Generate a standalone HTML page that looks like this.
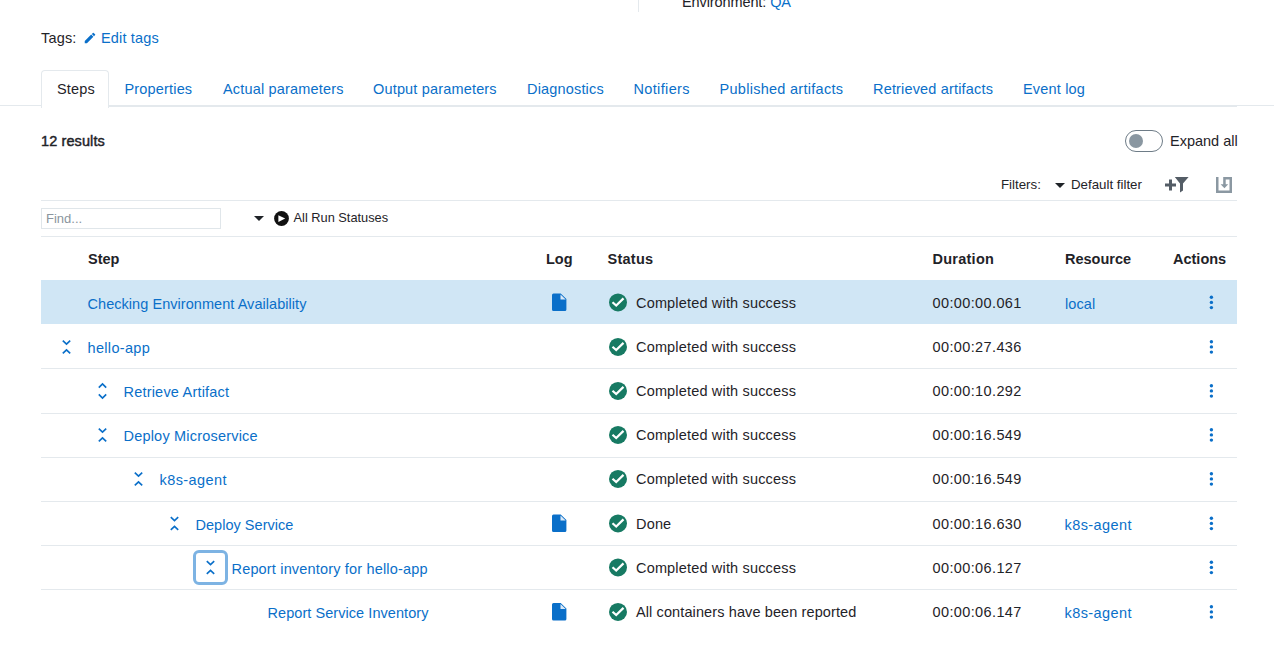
<!DOCTYPE html>
<html><head><meta charset="utf-8">
<style>
html,body{margin:0;padding:0;background:#fff;}
body{width:1274px;height:666px;overflow:hidden;position:relative;font-family:"Liberation Sans",sans-serif;font-size:14.5px;color:#1f2328;}
.a{position:absolute;white-space:nowrap;line-height:20px;letter-spacing:0.17px;}
.lnk{color:#0a6fc9;}
.hl{position:absolute;height:1px;background:#e4e9ed;}
.tab{position:absolute;top:79px;color:#0a6fc9;line-height:20px;white-space:nowrap;letter-spacing:0.17px;}
.th{position:absolute;top:249px;font-weight:bold;line-height:20px;white-space:nowrap;}
.row{position:absolute;left:41px;width:1196px;height:44px;}
.c{position:absolute;line-height:20px;white-space:nowrap;top:12px;}
.chk{position:absolute;width:18px;height:18px;}
.kebab{position:absolute;left:1168px;top:14px;width:4px;height:16px;}
.log{position:absolute;left:511px;top:13px;}
</style></head><body>

<!-- top fragment -->
<div style="position:absolute;left:638px;top:0;width:1px;height:11.5px;background:#e4e9ed"></div>
<div class="a" style="left:682px;top:-8.5px;letter-spacing:-0.1px">Environment: <span class="lnk">QA</span></div>

<!-- tags -->
<div class="a" style="left:41px;top:28px">Tags:</div>
<svg style="position:absolute;left:83px;top:30.5px" width="14" height="14" viewBox="0 0 24 24"><path fill="#0a6fc9" d="M3 17.25V21h3.75L17.81 9.94l-3.75-3.75L3 17.25zM20.71 7.04a1 1 0 000-1.41l-2.34-2.34a1 1 0 00-1.41 0l-1.83 1.83 3.75 3.75 1.83-1.83z"/></svg>
<div class="a lnk" style="left:101px;top:28px">Edit tags</div>

<!-- tabs -->
<div class="hl" style="left:0;top:105px;width:1274px"></div>
<div style="position:absolute;left:41px;top:105px;width:1196px;height:2px;background:#e4e9ed"></div>
<div style="position:absolute;left:41px;top:70px;width:66px;height:37px;border:1px solid #e4e9ed;border-bottom:none;border-radius:4px 4px 0 0;background:#fff"></div>
<div class="tab" style="left:57px;color:#1f2328">Steps</div>
<div class="tab" style="left:124.5px">Properties</div>
<div class="tab" style="left:223px">Actual parameters</div>
<div class="tab" style="left:373px">Output parameters</div>
<div class="tab" style="left:527px">Diagnostics</div>
<div class="tab" style="left:633.5px;letter-spacing:0.35px">Notifiers</div>
<div class="tab" style="left:719.5px;letter-spacing:0.28px">Published artifacts</div>
<div class="tab" style="left:873px">Retrieved artifacts</div>
<div class="tab" style="left:1023px">Event log</div>

<!-- results -->
<div class="a" style="left:41px;top:131px;-webkit-text-stroke:0.45px #1f2328;letter-spacing:0.1px">12 results</div>
<div style="position:absolute;left:1125px;top:130px;width:38px;height:21.5px;border:1px solid #6e7c87;border-radius:11px;box-sizing:border-box"></div>
<div style="position:absolute;left:1128.5px;top:133.7px;width:14.6px;height:14.6px;border-radius:50%;background:#8a97a1"></div>
<div class="a" style="left:1170px;top:131px;letter-spacing:0">Expand all</div>

<!-- filters -->
<div class="a" style="left:1001px;top:175px;font-size:13.3px;letter-spacing:0">Filters:</div>
<div style="position:absolute;left:1055px;top:183px;width:0;height:0;border-left:5px solid transparent;border-right:5px solid transparent;border-top:5px solid #1f2328"></div>
<div class="a" style="left:1071px;top:175px;font-size:13.3px;letter-spacing:0">Default filter</div>
<svg style="position:absolute;left:1165px;top:177px" width="24" height="16" viewBox="0 0 24 16"><path fill="#545d66" d="M0 6.5h4V2.4h3v4.1h4v3H7v4.1H4V9.5H0z"/><path fill="#545d66" d="M9.8 0H23.6L18 6.6V13.6L15 15.6V6.6z"/></svg>
<svg style="position:absolute;left:1216px;top:177px" width="16" height="16" viewBox="0 0 16 16"><path fill="#8b98a2" d="M0 0h2.5v13.5h11V2.5H9.7V8H7.2V0H16V16H0z"/><path fill="#8b98a2" d="M4.6 7.2H12.2L8.45 11.2z"/></svg>

<div class="hl" style="left:41px;top:200px;width:1196px"></div>
<div style="position:absolute;left:41px;top:208px;width:180px;height:21px;border:1px solid #e0e6ea;box-sizing:border-box"></div>
<div class="a" style="left:46px;top:209px;font-size:13px;color:#8a959e;letter-spacing:0">Find...</div>
<div style="position:absolute;left:254px;top:216px;width:0;height:0;border-left:5px solid transparent;border-right:5px solid transparent;border-top:5px solid #1f2328"></div>
<svg style="position:absolute;left:274px;top:211px" width="15" height="15" viewBox="0 0 15 15"><circle cx="7.5" cy="7.5" r="7.4" fill="#111"/><path fill="#fff" d="M4.4 4.3L11.2 7.6L4.4 11z"/></svg>
<div class="a" style="left:293.5px;top:208px;font-size:12.8px;letter-spacing:0">All Run Statuses</div>
<div class="hl" style="left:41px;top:236px;width:1196px"></div>

<!-- header -->
<div class="th" style="left:88px">Step</div>
<div class="th" style="left:546px">Log</div>
<div class="th" style="left:607.5px;letter-spacing:0.25px">Status</div>
<div class="th" style="left:932.5px;letter-spacing:0.25px">Duration</div>
<div class="th" style="left:1065px">Resource</div>
<div class="th" style="left:1173px">Actions</div>

<!-- rows -->
<div class="row" style="top:280px;background:#d0e6f5"></div>
<div class="hl" style="left:41px;top:368px;width:1196px"></div>
<div class="hl" style="left:41px;top:413px;width:1196px"></div>
<div class="hl" style="left:41px;top:457px;width:1196px"></div>
<div class="hl" style="left:41px;top:501px;width:1196px"></div>
<div class="hl" style="left:41px;top:545px;width:1196px"></div>
<div class="hl" style="left:41px;top:589px;width:1196px"></div>










<!-- ROWS -->
<div class="a lnk" style="left:87.5px;top:293.5px;letter-spacing:0.05px">Checking Environment Availability</div>
<svg style="position:absolute;left:552px;top:292px" width="15" height="20" viewBox="0 0 15 20"><g transform="translate(0,1.40)"><path fill="#0a6fc9" d="M1.5 0H8.7L14.4 5.7V16.1A1.5 1.5 0 0 1 12.9 17.6H1.5A1.5 1.5 0 0 1 0 16.1V1.5A1.5 1.5 0 0 1 1.5 0z"/><path fill="#fff" fill-opacity="0.85" d="M8.5 1V6.2H13.7z"/></g></svg>
<svg style="position:absolute;left:608px;top:292px" width="20" height="20" viewBox="0 0 20 20"><g transform="translate(1,1.40)"><circle cx="9" cy="9" r="9" fill="#177a63"/><path d="M3.5 8.8L7.2 12.2L14.5 5" fill="none" stroke="#fff" stroke-width="2.2"/></g></svg>
<div class="a" style="left:636px;top:292.5px;letter-spacing:0.17px">Completed with success</div>
<div class="a" style="left:932.5px;top:292.5px;letter-spacing:0.38px">00:00:00.061</div>
<div class="a lnk" style="left:1065px;top:293.5px;letter-spacing:0.1px">local</div>
<svg style="position:absolute;left:1209px;top:294px" width="5" height="16" viewBox="0 0 5 16"><g transform="translate(0,0.40)"><circle cx="2.4" cy="2.8" r="1.7" fill="#0a6fc9"/><circle cx="2.4" cy="8" r="1.7" fill="#0a6fc9"/><circle cx="2.4" cy="13.2" r="1.7" fill="#0a6fc9"/></g></svg>
<svg style="position:absolute;left:61px;top:339px" width="11" height="17" viewBox="0 0 11 17"><g transform="translate(0.50,0.00)"><path d="M1.3 1.7L5 5.2L8.7 1.7M1.3 14.3L5 10.8L8.7 14.3" fill="none" stroke="#0a6fc9" stroke-width="1.65"/></g></svg>
<div class="a lnk" style="left:87.5px;top:338px;letter-spacing:0.33px">hello-app</div>
<svg style="position:absolute;left:608px;top:337px" width="20" height="20" viewBox="0 0 20 20"><g transform="translate(1,0.90)"><circle cx="9" cy="9" r="9" fill="#177a63"/><path d="M3.5 8.8L7.2 12.2L14.5 5" fill="none" stroke="#fff" stroke-width="2.2"/></g></svg>
<div class="a" style="left:636px;top:337px;letter-spacing:0.17px">Completed with success</div>
<div class="a" style="left:932.5px;top:337px;letter-spacing:0.38px">00:00:27.436</div>
<svg style="position:absolute;left:1209px;top:339px" width="5" height="16" viewBox="0 0 5 16"><g transform="translate(0,-0.10)"><circle cx="2.4" cy="2.8" r="1.7" fill="#0a6fc9"/><circle cx="2.4" cy="8" r="1.7" fill="#0a6fc9"/><circle cx="2.4" cy="13.2" r="1.7" fill="#0a6fc9"/></g></svg>
<svg style="position:absolute;left:97px;top:382px" width="11" height="19" viewBox="0 0 11 19"><g transform="translate(0.50,0.00)"><path d="M1.3 5.6L5 1.9L8.7 5.6M1.3 12.4L5 16.1L8.7 12.4" fill="none" stroke="#0a6fc9" stroke-width="1.65"/></g></svg>
<div class="a lnk" style="left:123.5px;top:382px;letter-spacing:0.2px">Retrieve Artifact</div>
<svg style="position:absolute;left:608px;top:381px" width="20" height="20" viewBox="0 0 20 20"><g transform="translate(1,0.90)"><circle cx="9" cy="9" r="9" fill="#177a63"/><path d="M3.5 8.8L7.2 12.2L14.5 5" fill="none" stroke="#fff" stroke-width="2.2"/></g></svg>
<div class="a" style="left:636px;top:381px;letter-spacing:0.17px">Completed with success</div>
<div class="a" style="left:932.5px;top:381px;letter-spacing:0.38px">00:00:10.292</div>
<svg style="position:absolute;left:1209px;top:383px" width="5" height="16" viewBox="0 0 5 16"><g transform="translate(0,-0.10)"><circle cx="2.4" cy="2.8" r="1.7" fill="#0a6fc9"/><circle cx="2.4" cy="8" r="1.7" fill="#0a6fc9"/><circle cx="2.4" cy="13.2" r="1.7" fill="#0a6fc9"/></g></svg>
<svg style="position:absolute;left:97px;top:427px" width="11" height="17" viewBox="0 0 11 17"><g transform="translate(0.50,0.00)"><path d="M1.3 1.7L5 5.2L8.7 1.7M1.3 14.3L5 10.8L8.7 14.3" fill="none" stroke="#0a6fc9" stroke-width="1.65"/></g></svg>
<div class="a lnk" style="left:123.5px;top:426px;letter-spacing:0.2px">Deploy Microservice</div>
<svg style="position:absolute;left:608px;top:425px" width="20" height="20" viewBox="0 0 20 20"><g transform="translate(1,0.90)"><circle cx="9" cy="9" r="9" fill="#177a63"/><path d="M3.5 8.8L7.2 12.2L14.5 5" fill="none" stroke="#fff" stroke-width="2.2"/></g></svg>
<div class="a" style="left:636px;top:425px;letter-spacing:0.17px">Completed with success</div>
<div class="a" style="left:932.5px;top:425px;letter-spacing:0.38px">00:00:16.549</div>
<svg style="position:absolute;left:1209px;top:427px" width="5" height="16" viewBox="0 0 5 16"><g transform="translate(0,-0.10)"><circle cx="2.4" cy="2.8" r="1.7" fill="#0a6fc9"/><circle cx="2.4" cy="8" r="1.7" fill="#0a6fc9"/><circle cx="2.4" cy="13.2" r="1.7" fill="#0a6fc9"/></g></svg>
<svg style="position:absolute;left:133px;top:471px" width="11" height="17" viewBox="0 0 11 17"><g transform="translate(0.50,0.00)"><path d="M1.3 1.7L5 5.2L8.7 1.7M1.3 14.3L5 10.8L8.7 14.3" fill="none" stroke="#0a6fc9" stroke-width="1.65"/></g></svg>
<div class="a lnk" style="left:159.5px;top:470px;letter-spacing:0.42px">k8s-agent</div>
<svg style="position:absolute;left:608px;top:469px" width="20" height="20" viewBox="0 0 20 20"><g transform="translate(1,0.90)"><circle cx="9" cy="9" r="9" fill="#177a63"/><path d="M3.5 8.8L7.2 12.2L14.5 5" fill="none" stroke="#fff" stroke-width="2.2"/></g></svg>
<div class="a" style="left:636px;top:469px;letter-spacing:0.17px">Completed with success</div>
<div class="a" style="left:932.5px;top:469px;letter-spacing:0.38px">00:00:16.549</div>
<svg style="position:absolute;left:1209px;top:471px" width="5" height="16" viewBox="0 0 5 16"><g transform="translate(0,-0.10)"><circle cx="2.4" cy="2.8" r="1.7" fill="#0a6fc9"/><circle cx="2.4" cy="8" r="1.7" fill="#0a6fc9"/><circle cx="2.4" cy="13.2" r="1.7" fill="#0a6fc9"/></g></svg>
<svg style="position:absolute;left:169px;top:515px" width="11" height="17" viewBox="0 0 11 17"><g transform="translate(0.50,0.50)"><path d="M1.3 1.7L5 5.2L8.7 1.7M1.3 14.3L5 10.8L8.7 14.3" fill="none" stroke="#0a6fc9" stroke-width="1.65"/></g></svg>
<div class="a lnk" style="left:195.5px;top:514.5px;letter-spacing:0.03px">Deploy Service</div>
<svg style="position:absolute;left:552px;top:513px" width="15" height="20" viewBox="0 0 15 20"><g transform="translate(0,1.40)"><path fill="#0a6fc9" d="M1.5 0H8.7L14.4 5.7V16.1A1.5 1.5 0 0 1 12.9 17.6H1.5A1.5 1.5 0 0 1 0 16.1V1.5A1.5 1.5 0 0 1 1.5 0z"/><path fill="#fff" fill-opacity="0.85" d="M8.5 1V6.2H13.7z"/></g></svg>
<svg style="position:absolute;left:608px;top:513px" width="20" height="20" viewBox="0 0 20 20"><g transform="translate(1,1.40)"><circle cx="9" cy="9" r="9" fill="#177a63"/><path d="M3.5 8.8L7.2 12.2L14.5 5" fill="none" stroke="#fff" stroke-width="2.2"/></g></svg>
<div class="a" style="left:636px;top:513.5px;letter-spacing:0.17px">Done</div>
<div class="a" style="left:932.5px;top:513.5px;letter-spacing:0.38px">00:00:16.630</div>
<div class="a lnk" style="left:1064.5px;top:514.5px;letter-spacing:0.42px">k8s-agent</div>
<svg style="position:absolute;left:1209px;top:515px" width="5" height="16" viewBox="0 0 5 16"><g transform="translate(0,0.40)"><circle cx="2.4" cy="2.8" r="1.7" fill="#0a6fc9"/><circle cx="2.4" cy="8" r="1.7" fill="#0a6fc9"/><circle cx="2.4" cy="13.2" r="1.7" fill="#0a6fc9"/></g></svg>
<div style="position:absolute;left:193px;top:550px;width:35px;height:35px;border:3px solid #7db3e3;border-radius:6px;box-sizing:border-box"></div>
<svg style="position:absolute;left:205px;top:559px" width="11" height="17" viewBox="0 0 11 17"><g transform="translate(0.50,0.50)"><path d="M1.3 1.7L5 5.2L8.7 1.7M1.3 14.3L5 10.8L8.7 14.3" fill="none" stroke="#0a6fc9" stroke-width="1.65"/></g></svg>
<div class="a lnk" style="left:231.5px;top:558.5px;letter-spacing:0.17px">Report inventory for hello-app</div>
<svg style="position:absolute;left:608px;top:557px" width="20" height="20" viewBox="0 0 20 20"><g transform="translate(1,1.40)"><circle cx="9" cy="9" r="9" fill="#177a63"/><path d="M3.5 8.8L7.2 12.2L14.5 5" fill="none" stroke="#fff" stroke-width="2.2"/></g></svg>
<div class="a" style="left:636px;top:557.5px;letter-spacing:0.17px">Completed with success</div>
<div class="a" style="left:932.5px;top:557.5px;letter-spacing:0.38px">00:00:06.127</div>
<svg style="position:absolute;left:1209px;top:559px" width="5" height="16" viewBox="0 0 5 16"><g transform="translate(0,0.40)"><circle cx="2.4" cy="2.8" r="1.7" fill="#0a6fc9"/><circle cx="2.4" cy="8" r="1.7" fill="#0a6fc9"/><circle cx="2.4" cy="13.2" r="1.7" fill="#0a6fc9"/></g></svg>
<div class="a lnk" style="left:267.5px;top:603px;letter-spacing:0.06px">Report Service Inventory</div>
<svg style="position:absolute;left:552px;top:602px" width="15" height="20" viewBox="0 0 15 20"><g transform="translate(0,0.90)"><path fill="#0a6fc9" d="M1.5 0H8.7L14.4 5.7V16.1A1.5 1.5 0 0 1 12.9 17.6H1.5A1.5 1.5 0 0 1 0 16.1V1.5A1.5 1.5 0 0 1 1.5 0z"/><path fill="#fff" fill-opacity="0.85" d="M8.5 1V6.2H13.7z"/></g></svg>
<svg style="position:absolute;left:608px;top:602px" width="20" height="20" viewBox="0 0 20 20"><g transform="translate(1,0.90)"><circle cx="9" cy="9" r="9" fill="#177a63"/><path d="M3.5 8.8L7.2 12.2L14.5 5" fill="none" stroke="#fff" stroke-width="2.2"/></g></svg>
<div class="a" style="left:636px;top:602px;letter-spacing:0.11px">All containers have been reported</div>
<div class="a" style="left:932.5px;top:602px;letter-spacing:0.38px">00:00:06.147</div>
<div class="a lnk" style="left:1064.5px;top:603px;letter-spacing:0.42px">k8s-agent</div>
<svg style="position:absolute;left:1209px;top:604px" width="5" height="16" viewBox="0 0 5 16"><g transform="translate(0,-0.10)"><circle cx="2.4" cy="2.8" r="1.7" fill="#0a6fc9"/><circle cx="2.4" cy="8" r="1.7" fill="#0a6fc9"/><circle cx="2.4" cy="13.2" r="1.7" fill="#0a6fc9"/></g></svg>
<!-- /ROWS -->
</body></html>
